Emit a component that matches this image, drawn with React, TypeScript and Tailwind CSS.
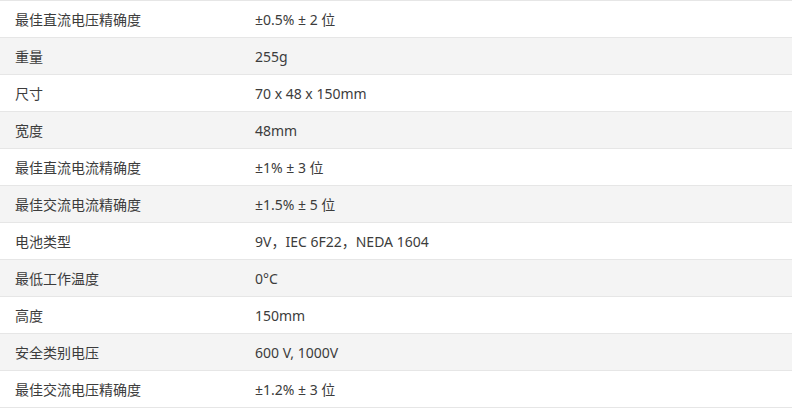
const specs = [
  { label: '最佳直流电压精确度', value: '±0.5% ± 2 位' },
  { label: '重量', value: '255g' },
  { label: '尺寸', value: '70 x 48 x 150mm' },
  { label: '宽度', value: '48mm' },
  { label: '最佳直流电流精确度', value: '±1% ± 3 位' },
  { label: '最佳交流电流精确度', value: '±1.5% ± 5 位' },
  { label: '电池类型', value: '9V，IEC 6F22，NEDA 1604' },
  { label: '最低工作温度', value: '0°C' },
  { label: '高度', value: '150mm' },
  { label: '安全类别电压', value: '600 V, 1000V' },
  { label: '最佳交流电压精确度', value: '±1.2% ± 3 位' },
];

export default function App() {
  return (
    <div className="w-[794px] bg-white font-['Noto_Sans','Noto_Sans_CJK_SC',sans-serif] text-[14px] text-[#3c3c3c]">
      <div className="w-[792px] border-b border-[#e6e6e6]">
        {specs.map((row, i) => (
          <div
            key={row.label}
            className={`flex h-[37px] items-center border-t border-[#e6e6e6] ${
              i % 2 === 1 ? 'bg-[#f4f4f4]' : 'bg-white'
            }`}
          >
            <div className="w-[240px] pl-[15px]">{row.label}</div>
            <div className="pl-[15px]">{row.value}</div>
          </div>
        ))}
      </div>
    </div>
  );
}
